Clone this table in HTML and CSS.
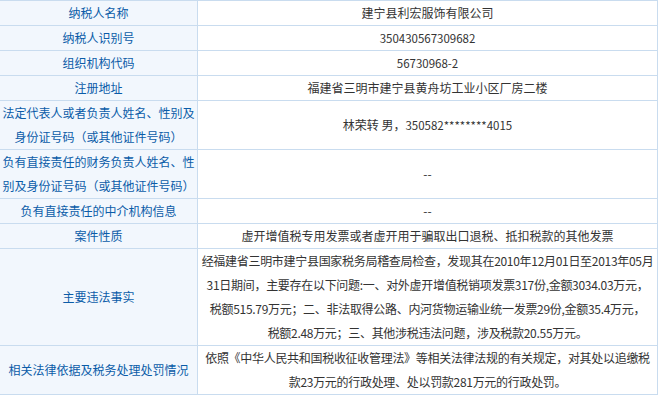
FILE: index.html
```html
<!DOCTYPE html>
<html lang="zh-CN">
<head>
<meta charset="utf-8">
<title>纳税人信息</title>
<link rel="stylesheet" href="styles.css">
</head>
<body>
<table class="info">
  <tr><th>纳税人名称</th><td>建宁县利宏服饰有限公司</td></tr>
  <tr><th>纳税人识别号</th><td class="num">350430567309682</td></tr>
  <tr><th>组织机构代码</th><td class="num">56730968-2</td></tr>
  <tr><th>注册地址</th><td>福建省三明市建宁县黄舟坊工业小区厂房二楼</td></tr>
  <tr><th>法定代表人或者负责人姓名、性别及身份证号码（或其他证件号码）</th><td>林荣转&nbsp;男，<span class="num">350582********4015</span></td></tr>
  <tr><th>负有直接责任的财务负责人姓名、性别及身份证号码（或其他证件号码）</th><td>--</td></tr>
  <tr><th>负有直接责任的中介机构信息</th><td>--</td></tr>
  <tr><th>案件性质</th><td>虚开增值税专用发票或者虚开用于骗取出口退税、抵扣税款的其他发票</td></tr>
  <tr><th>主要违法事实</th><td class="long">经福建省三明市建宁县国家税务局稽查局检查，发现其在2010年12月01日至2013年05月<br>31日期间，主要存在以下问题:一、对外虚开增值税销项发票317份,金额3034.03万元，<br>税额515.79万元；二、非法取得公路、内河货物运输业统一发票29份,金额35.4万元，<br>税额2.48万元；三、其他涉税违法问题，涉及税款20.55万元。</td></tr>
  <tr><th>相关法律依据及税务处理处罚情况</th><td class="long">依照《中华人民共和国税收征收管理法》等相关法律法规的有关规定，对其处以追缴税<br>款23万元的行政处理、处以罚款281万元的行政处罚。</td></tr>
</table>
</body>
</html>
```
FILE: styles.css
```css
html, body {
  margin: 0;
  padding: 0;
  background: #ffffff;
}

.info {
  width: 658px;
  border-collapse: separate;
  border-spacing: 0;
  border-top: 1px solid #c9dcef;
  table-layout: fixed;
  font-family: "Noto Sans CJK SC", "Noto Sans", sans-serif;
  font-size: 12px;
  line-height: 24px;
}

.info th,
.info td {
  padding: 0;
  text-align: center;
  vertical-align: middle;
  border-right: 1px solid #c9dcef;
  border-bottom: 1px solid #c9dcef;
}

.info th {
  width: 197px;
  background: #f2f7fd;
  color: #0b5ca8;
  font-weight: normal;
}

.info td {
  color: #333333;
}

.info .num {
  font-size: 11.5px;
}

.info .long {
  white-space: nowrap;
  letter-spacing: -0.3px;
}
```
